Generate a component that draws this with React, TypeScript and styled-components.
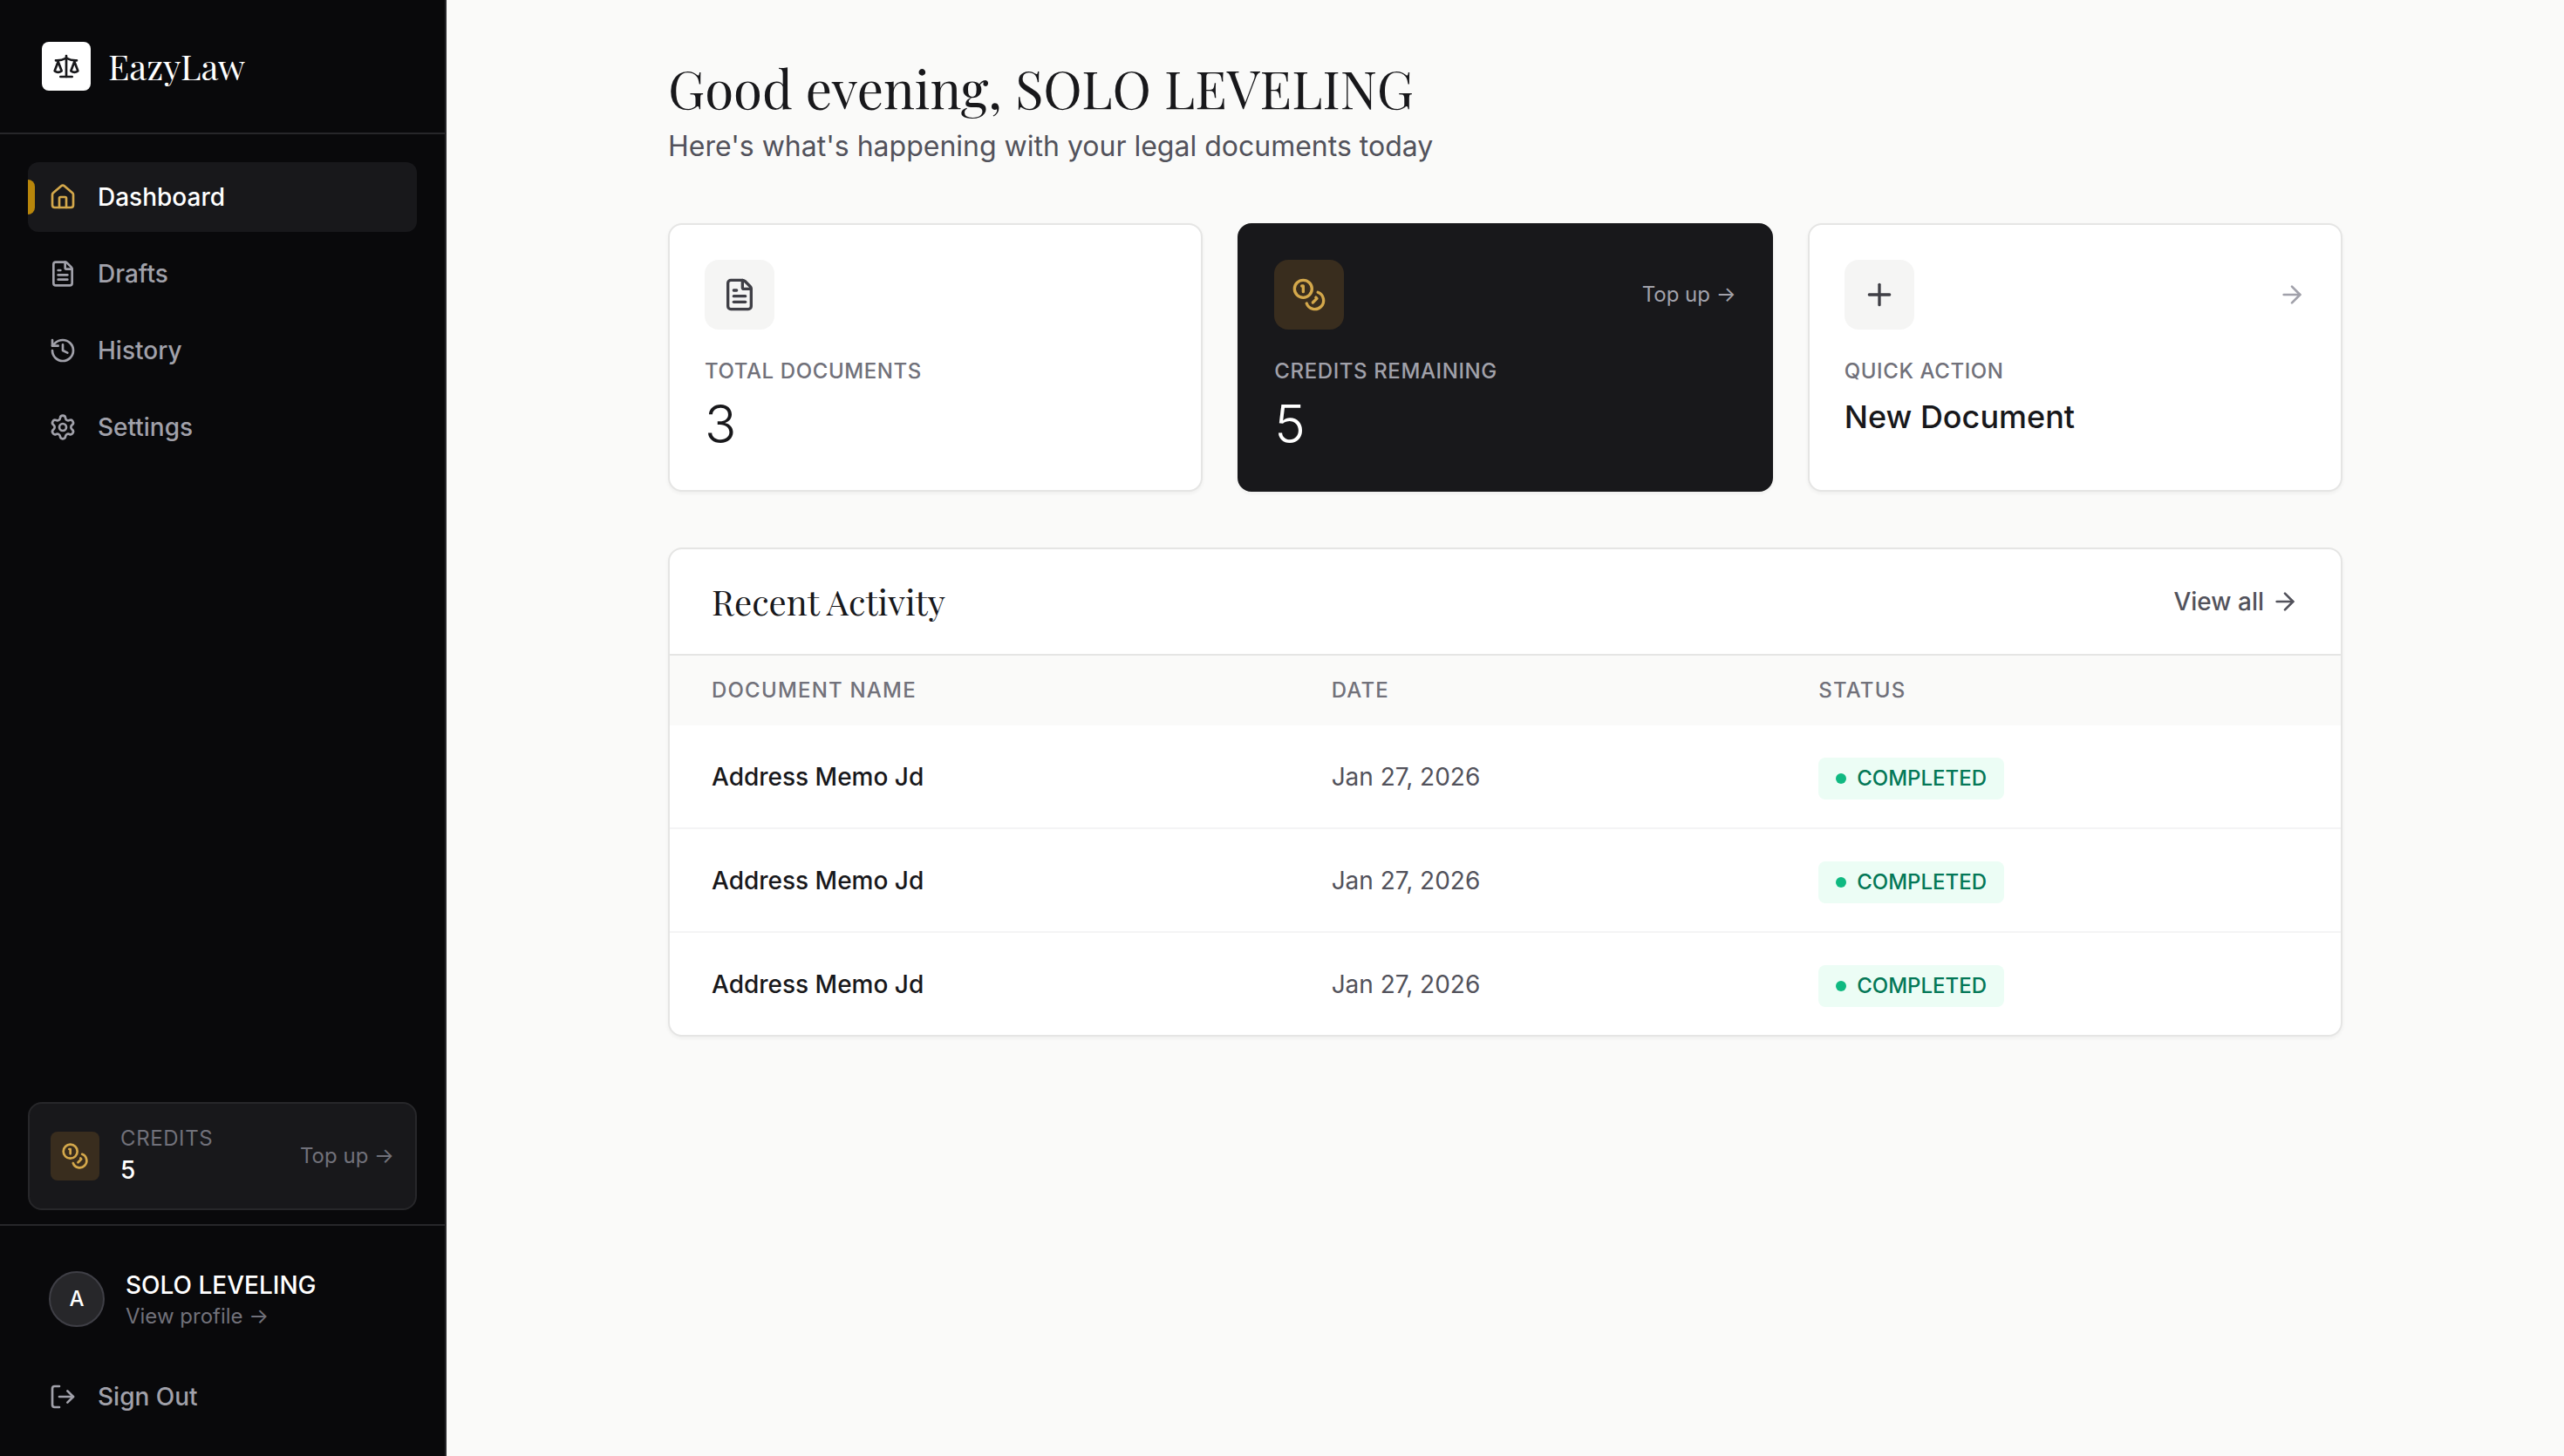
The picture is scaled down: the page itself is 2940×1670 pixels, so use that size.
import React from "react";
import styled, { createGlobalStyle, css } from "styled-components";
import { ArrowRight, FileText, History, House, LogOut, Plus, Scale, Settings } from "lucide-react";

const sans = `Inter, "Liberation Sans", sans-serif`;
const serif = `"Playfair Display", "Liberation Serif", serif`;

const GlobalStyle = createGlobalStyle`
  *, *::before, *::after { box-sizing: border-box; }
  body {
    margin: 0;
    background: #fafaf9;
    color: #18181b;
    font-family: ${sans};
    font-size: 28px;
    line-height: 40px;
    -webkit-font-smoothing: antialiased;
  }
  h1, h2, p { margin: 0; font-weight: 400; }
  a { color: inherit; text-decoration: none; }
  svg { display: block; flex: none; }
`;

const Shell = styled.div`
  display: flex;
  min-height: 100vh;
`;

const Sidebar = styled.aside`
  display: flex;
  flex-direction: column;
  flex: none;
  width: 512px;
  background: #09090b;
  border-right: 2px solid #27272a;
  color: #ffffff;
`;

const Brand = styled.a`
  display: flex;
  align-items: center;
  gap: 20px;
  padding: 48px;
  border-bottom: 2px solid #27272a;
`;

const BrandMark = styled.span`
  display: grid;
  place-items: center;
  width: 56px;
  height: 56px;
  border-radius: 8px;
  background: #ffffff;
  color: #18181b;
`;

const BrandName = styled.span`
  font-family: ${serif};
  font-size: 40px;
  line-height: 56px;
`;

const Nav = styled.nav`
  display: flex;
  flex-direction: column;
  flex: 1;
  gap: 8px;
  padding: 32px;
`;

const itemLayout = css`
  display: flex;
  align-items: center;
  gap: 24px;
  font: 500 28px/40px ${sans};
`;

const NavItem = styled.a<{ $active?: boolean }>`
  ${itemLayout}
  position: relative;
  padding: 20px 24px;
  border-radius: 12px;
  color: ${(p) => (p.$active ? "#ffffff" : "#a1a1aa")};
  background: ${(p) => (p.$active ? "#18181b" : "transparent")};
  svg { color: ${(p) => (p.$active ? "#d4a84b" : "inherit")}; }
  ${(p) =>
    p.$active &&
    css`
      &::before {
        content: "";
        position: absolute;
        left: 0;
        top: 20px;
        bottom: 20px;
        width: 8px;
        border-radius: 0 8px 8px 0;
        background: #b8860b;
      }
    `}
`;

const CreditsCard = styled.a`
  display: flex;
  align-items: center;
  gap: 24px;
  margin: 0 32px 16px;
  padding: 24px;
  border: 2px solid #27272a;
  border-radius: 16px;
  background: #18181b;
`;

const Stack = styled.span`
  display: flex;
  flex: 1;
  flex-direction: column;
`;

const IconTile = styled.span<{ $size: number; $gold?: boolean }>`
  display: grid;
  place-items: center;
  flex: none;
  width: ${(p) => p.$size}px;
  height: ${(p) => p.$size}px;
  border-radius: ${(p) => (p.$size > 60 ? 16 : 8)}px;
  background: ${(p) => (p.$gold ? "#392d1e" : "#f5f5f4")};
  color: ${(p) => (p.$gold ? "#d4a84b" : "#3f3f46")};
`;

const Small = styled.span<{ $tone: string; $tracked?: boolean; $medium?: boolean }>`
  font-size: 24px;
  line-height: 32px;
  font-weight: ${(p) => (p.$medium ? 500 : 400)};
  letter-spacing: ${(p) => (p.$tracked ? "0.025em" : "normal")};
  text-transform: ${(p) => (p.$tracked ? "uppercase" : "none")};
  color: ${(p) => p.$tone};
`;

const Strong = styled.span`
  font-weight: 500;
`;

const Account = styled.div`
  display: flex;
  flex-direction: column;
  gap: 8px;
  padding: 24px 32px;
  border-top: 2px solid #27272a;
`;

const Profile = styled.a`
  display: flex;
  align-items: center;
  gap: 24px;
  padding: 24px;
`;

const Avatar = styled.span`
  display: grid;
  place-items: center;
  width: 64px;
  height: 64px;
  border: 2px solid #3f3f46;
  border-radius: 50%;
  background: #27272a;
  font-size: 24px;
  font-weight: 500;
`;

const SignOut = styled.button`
  ${itemLayout}
  padding: 24px;
  border: 0;
  background: none;
  color: #a1a1aa;
  text-align: left;
  cursor: pointer;
`;

const Main = styled.main`
  flex: 1;
  min-width: 0;
`;

const Content = styled.div`
  display: flex;
  flex-direction: column;
  gap: 64px;
  max-width: 2048px;
  margin: 0 auto;
  padding: 64px;
`;

const Header = styled.header`
  display: flex;
  flex-direction: column;
  gap: 8px;
`;

const Title = styled.h1`
  font-family: ${serif};
  font-size: 60px;
  line-height: 72px;
`;

const Subtitle = styled.p`
  font-size: 32px;
  line-height: 48px;
  color: #52525b;
`;

const Cards = styled.section`
  display: grid;
  grid-template-columns: repeat(3, 1fr);
  gap: 40px;
`;

const Card = styled.article<{ $dark?: boolean }>`
  display: flex;
  flex-direction: column;
  padding: 40px;
  border: 2px solid ${(p) => (p.$dark ? "#18181b" : "#e5e5e4")};
  border-radius: 16px;
  background: ${(p) => (p.$dark ? "#18181b" : "#ffffff")};
  color: ${(p) => (p.$dark ? "#ffffff" : "#18181b")};
  box-shadow: 0 2px 4px rgba(0, 0, 0, 0.05);
`;

const CardTop = styled.div`
  display: flex;
  align-items: center;
  justify-content: space-between;
  margin-bottom: 32px;
  color: #a1a1aa;
`;

const Figure = styled.p`
  margin-top: 8px;
  font-size: 60px;
  font-weight: 300;
  line-height: 72px;
`;

const ActionName = styled.p`
  margin-top: 8px;
  font-size: 36px;
  font-weight: 500;
  line-height: 56px;
`;

const Panel = styled.section`
  overflow: hidden;
  border: 2px solid #e5e5e4;
  border-radius: 16px;
  background: #ffffff;
  box-shadow: 0 2px 4px rgba(0, 0, 0, 0.05);
`;

const PanelHeader = styled.div`
  display: flex;
  align-items: center;
  justify-content: space-between;
  padding: 32px 48px;
  border-bottom: 2px solid #e5e5e4;
`;

const PanelTitle = styled.h2`
  font-family: ${serif};
  font-size: 40px;
  line-height: 56px;
`;

const ViewAll = styled.a`
  display: flex;
  align-items: center;
  gap: 8px;
  font-weight: 500;
  color: #52525b;
`;

const Table = styled.table`
  width: 100%;
  border-spacing: 0;
  text-align: left;
`;

const HeadCell = styled.th`
  padding: 24px 48px;
  background: #fafaf9;
  color: #71717a;
  font-size: 24px;
  font-weight: 500;
  line-height: 32px;
  letter-spacing: 0.05em;
  text-transform: uppercase;
`;

const Cell = styled.td`
  padding: 32px 48px;
  font-size: 32px;
  line-height: 48px;
  border-bottom: 2px solid #f4f4f5;
  tr:last-child > & {
    border-bottom: 0;
  }
`;

const CellText = styled.p<{ $strong?: boolean }>`
  font-size: 28px;
  line-height: 40px;
  font-weight: ${(p) => (p.$strong ? 500 : 400)};
  color: ${(p) => (p.$strong ? "#18181b" : "#52525b")};
`;

const Badge = styled.span`
  display: inline-flex;
  align-items: center;
  gap: 12px;
  padding: 8px 20px;
  border-radius: 8px;
  background: #ecfdf5;
  color: #047857;
  font-size: 24px;
  font-weight: 500;
  line-height: 32px;
  text-transform: uppercase;
`;

const Dot = styled.span`
  width: 12px;
  height: 12px;
  border-radius: 50%;
  background: #10b981;
`;

function CoinsIcon({ size }: { size: number }) {
  return (
    <svg
      width={size}
      height={size}
      viewBox="0 0 24 24"
      fill="none"
      stroke="currentColor"
      strokeWidth="2"
      strokeLinecap="round"
      strokeLinejoin="round"
      aria-hidden="true"
    >
      <circle cx="8" cy="8" r="6" />
      <path d="M18.09 10.37A6 6 0 1 1 10.34 18" />
      <path d="M7 6h1v4" />
      <path d="m16.71 13.88.7.71-2.82 2.82" />
    </svg>
  );
}

const navItems = [
  { label: "Dashboard", icon: House, active: true },
  { label: "Drafts", icon: FileText },
  { label: "History", icon: History },
  { label: "Settings", icon: Settings },
];

const documents = [
  { id: 1, name: "Address Memo Jd", date: "Jan 27, 2026", status: "Completed" },
  { id: 2, name: "Address Memo Jd", date: "Jan 27, 2026", status: "Completed" },
  { id: 3, name: "Address Memo Jd", date: "Jan 27, 2026", status: "Completed" },
];

export default function App() {
  return (
    <Shell>
      <GlobalStyle />
      <Sidebar>
        <Brand href="#">
          <BrandMark>
            <Scale size={32} />
          </BrandMark>
          <BrandName>EazyLaw</BrandName>
        </Brand>
        <Nav>
          {navItems.map(({ label, icon: Icon, active }) => (
            <NavItem key={label} href="#" $active={active} aria-current={active ? "page" : undefined}>
              <Icon size={32} />
              {label}
            </NavItem>
          ))}
        </Nav>
        <CreditsCard href="#">
          <IconTile $size={56} $gold>
            <CoinsIcon size={32} />
          </IconTile>
          <Stack>
            <Small $tone="#71717a" $tracked>Credits</Small>
            <Strong>5</Strong>
          </Stack>
          <Small $tone="#71717a">Top up →</Small>
        </CreditsCard>
        <Account>
          <Profile href="#">
            <Avatar>A</Avatar>
            <Stack>
              <Strong>SOLO LEVELING</Strong>
              <Small $tone="#71717a">View profile →</Small>
            </Stack>
          </Profile>
          <SignOut type="button">
            <LogOut size={32} />
            Sign Out
          </SignOut>
        </Account>
      </Sidebar>
      <Main>
        <Content>
          <Header>
            <Title>Good evening, SOLO LEVELING</Title>
            <Subtitle>Here's what's happening with your legal documents today</Subtitle>
          </Header>
          <Cards>
            <Card>
              <CardTop>
                <IconTile $size={80}>
                  <FileText size={40} />
                </IconTile>
              </CardTop>
              <Small $tone="#71717a" $tracked $medium>Total Documents</Small>
              <Figure>3</Figure>
            </Card>
            <Card $dark>
              <CardTop>
                <IconTile $size={80} $gold>
                  <CoinsIcon size={40} />
                </IconTile>
                <Small as="a" href="#" $tone="#a1a1aa">Top up →</Small>
              </CardTop>
              <Small $tone="#a1a1aa" $tracked $medium>Credits Remaining</Small>
              <Figure>5</Figure>
            </Card>
            <Card as="a" href="#">
              <CardTop>
                <IconTile $size={80}>
                  <Plus size={40} />
                </IconTile>
                <ArrowRight size={32} />
              </CardTop>
              <Small $tone="#71717a" $tracked $medium>Quick Action</Small>
              <ActionName>New Document</ActionName>
            </Card>
          </Cards>
          <Panel>
            <PanelHeader>
              <PanelTitle>Recent Activity</PanelTitle>
              <ViewAll href="#">
                View all
                <ArrowRight size={32} />
              </ViewAll>
            </PanelHeader>
            <Table>
              <thead>
                <tr>
                  <HeadCell scope="col">Document Name</HeadCell>
                  <HeadCell scope="col">Date</HeadCell>
                  <HeadCell scope="col">Status</HeadCell>
                </tr>
              </thead>
              <tbody>
                {documents.map((doc) => (
                  <tr key={doc.id}>
                    <Cell>
                      <CellText $strong>{doc.name}</CellText>
                    </Cell>
                    <Cell>
                      <CellText>{doc.date}</CellText>
                    </Cell>
                    <Cell>
                      <Badge>
                        <Dot />
                        {doc.status}
                      </Badge>
                    </Cell>
                  </tr>
                ))}
              </tbody>
            </Table>
          </Panel>
        </Content>
      </Main>
    </Shell>
  );
}
